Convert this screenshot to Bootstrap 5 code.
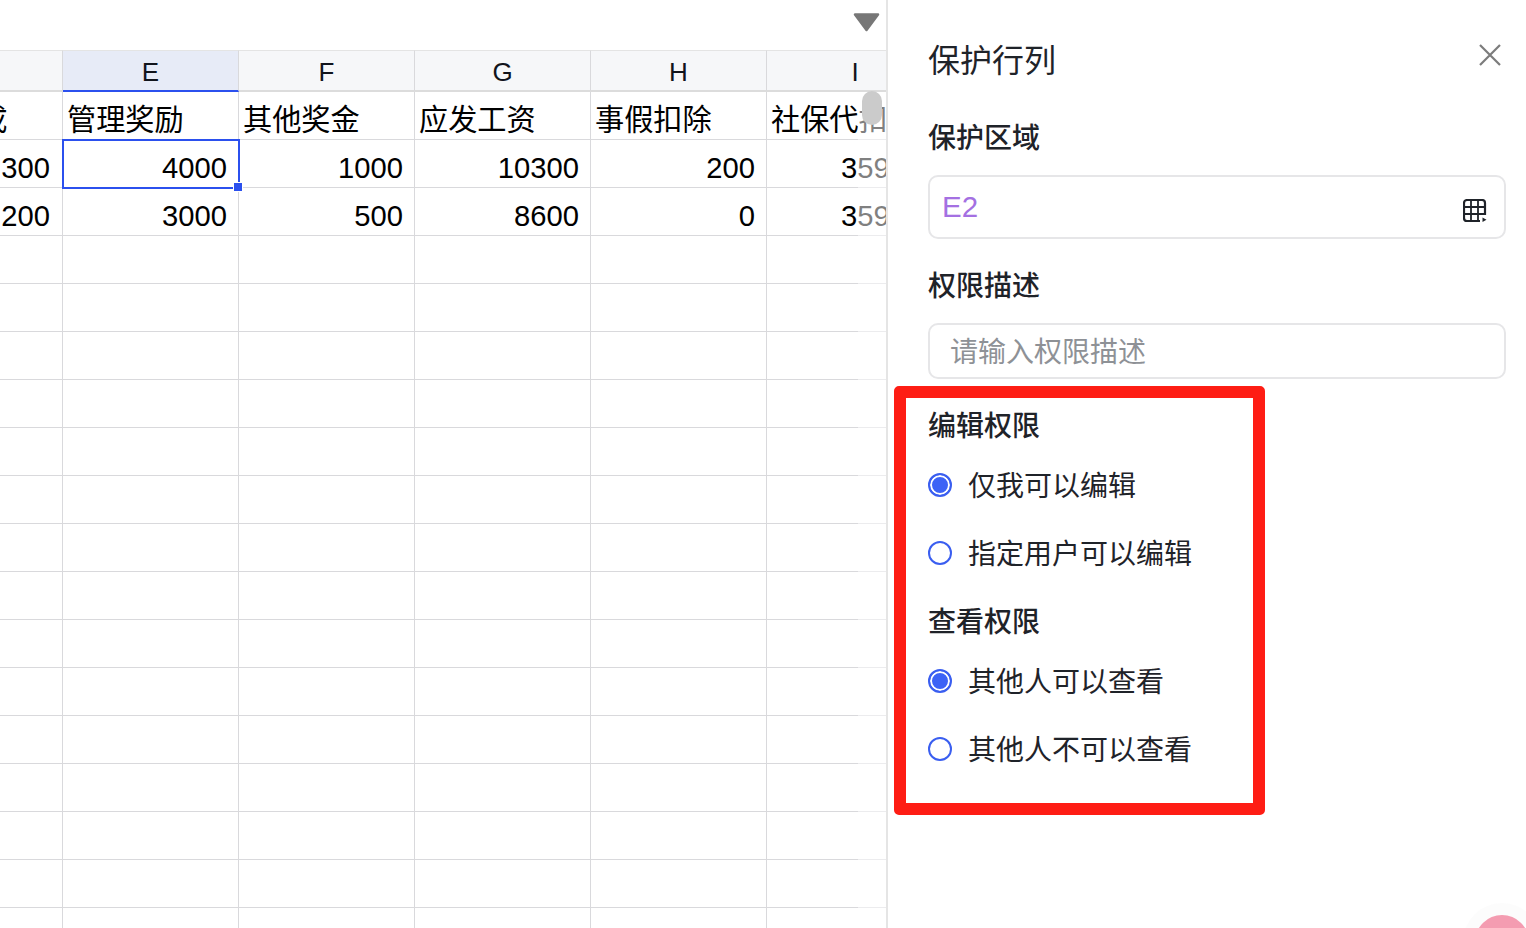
<!DOCTYPE html>
<html lang="zh">
<head>
<meta charset="utf-8">
<title>保护行列</title>
<link href="https://cdn.jsdelivr.net/npm/bootstrap@5.3.0/dist/css/bootstrap.min.css" rel="stylesheet">
<style>
html,body{height:100%;overflow:hidden;background:#fff;}
body{font-family:"Liberation Sans","Noto Sans CJK SC",sans-serif;color:#000;}
.stage{height:928px;position:relative;overflow:hidden;}
.sheet-pane{width:886px;flex:none;position:relative;overflow:hidden;height:928px;}
.sheet-top{height:50px;position:relative;}
.tri-btn{position:absolute;left:853px;top:13px;}
.sheet-grid{table-layout:fixed;width:943px;border-collapse:separate;border-spacing:0;margin:0;font-size:29.2px;line-height:36px;}
.sheet-grid col.c0{width:63px;}
.sheet-grid col.cn{width:176px;}
.sheet-grid td,.sheet-grid th{height:48px;padding:8px 11px 0 4px;border-right:1px solid #d9d9dc;border-bottom:1px solid #d9d9dc;overflow:hidden;white-space:nowrap;font-weight:400;vertical-align:middle;color:#000;}
.sheet-grid th{height:42px;background:#f6f7f9;text-align:center;font-size:26px;border-top:1px solid #e4e4e4;border-bottom:2px solid #dcdcdc;padding:3px 0 0;color:#11141c;}
.sheet-grid th.active-col{background:#e7ebf7;border-bottom-color:#2b50ee;}
.sheet-grid th:last-child,.sheet-grid td:last-child{border-right:0;}
.sheet-grid td.num{text-align:right;}
.sheet-grid .title-row td{padding-top:8px;}
.sheet-grid td.edge-num{padding-left:0;padding-right:12px;}
.sheet-grid td.tail-num{padding-right:37px;}
.sheet-grid .title-row td.cut{padding-left:0;padding-right:0;}
.clip-left{display:block;margin-left:-51px;}
.sel-cell{position:absolute;left:62px;top:139px;width:178px;height:50px;border:2px solid #2b50ee;pointer-events:none;}
.sel-dot{position:absolute;right:-5px;bottom:-5px;width:10px;height:10px;background:#2b50ee;border:1px solid #fff;}
.scroll-veil{position:absolute;left:858px;top:92px;width:28px;bottom:0;background:rgba(255,255,255,.5);}
.scroll-thumb{position:absolute;left:862px;top:91px;width:20px;height:34px;border-radius:10px;background:#cbcbcb;}
.side-pane{flex:1;border-left:2px solid #e5e5e5;padding:40px 20px 0 40px;color:#1f2329;font-family:"Noto Sans CJK SC","Liberation Sans",sans-serif;}
.side-title{font-size:32px;line-height:36px;font-weight:400;margin:0;padding-bottom:4px;}
.close-x{position:absolute;right:25px;top:44px;}
.side-label{font-size:28px;line-height:38px;font-weight:500;margin:0;display:block;padding:0 0 2px;}
.mt-a{margin-top:37px;}
.mt-b{margin-top:26px;}
.mt-d{margin-top:26px;}
.mt-e{margin-top:27px;}
.mt-c{margin-top:28px;}
.field{border:2px solid #e6e6e8;border-radius:10px;margin-top:18px;background:#fff;}
.field-range{height:64px;padding:0 17px 0 12px;}
.field-text{height:56px;padding:0 20px 2px;}
.field .form-control{border:0;padding:0;box-shadow:none;background:transparent;border-radius:0;font-size:28px;line-height:36px;}
.field-range .form-control{color:#a470e2;font-family:"Liberation Sans",sans-serif;font-size:29.5px;}
.field-text .form-control::placeholder{color:#8e9196;opacity:1;}
.range-ico{flex:none;margin-top:8px;}
.opt{min-height:0;height:40px;padding:0;margin:28px 0 0;gap:16px;}
.opt.first{margin-top:20px;}
.opt .form-check-input{float:none;margin:0;width:24px;height:24px;flex:none;border:2px solid #3a5ef0;background-color:#fff;background-image:none;}
.opt .form-check-input:checked{background-color:#3d63f6;background-image:none;box-shadow:inset 0 0 0 2px #fff;}
.opt .form-check-label{font-size:28px;line-height:38px;margin-bottom:2px;}
.mark-box{position:absolute;left:894px;top:386px;width:371px;height:429px;border:12px solid #fe1d14;border-radius:5px;pointer-events:none;}
.help-ball{position:absolute;left:1475px;top:915px;width:54px;height:54px;border-radius:50%;background:#f49cb1;box-shadow:0 0 0 12px rgba(240,240,240,.18);}
</style>
</head>
<body>
<div class="stage d-flex">
  <div class="sheet-pane">
    <div class="sheet-top">
      <svg class="tri-btn" width="27" height="19" viewBox="0 0 27 19"><path d="M2 1.5H25L13.5 17Z" fill="#777" stroke="#777" stroke-width="2.5" stroke-linejoin="round"/></svg>
    </div>
    <table class="sheet-grid">
      <colgroup><col class="c0"><col class="cn"><col class="cn"><col class="cn"><col class="cn"><col class="cn"></colgroup>
      <thead><tr><th></th><th class="active-col">E</th><th>F</th><th>G</th><th>H</th><th>I</th></tr></thead>
      <tbody>
        <tr class="title-row"><td class="cut"><span class="clip-left">提成</span></td><td>管理奖励</td><td>其他奖金</td><td>应发工资</td><td>事假扣除</td><td>社保代扣</td></tr>
        <tr><td class="num edge-num">300</td><td class="num">4000</td><td class="num">1000</td><td class="num">10300</td><td class="num">200</td><td class="num tail-num">3590</td></tr>
        <tr><td class="num edge-num">200</td><td class="num">3000</td><td class="num">500</td><td class="num">8600</td><td class="num">0</td><td class="num tail-num">3590</td></tr>
        <tr><td></td><td></td><td></td><td></td><td></td><td></td></tr>
        <tr><td></td><td></td><td></td><td></td><td></td><td></td></tr>
        <tr><td></td><td></td><td></td><td></td><td></td><td></td></tr>
        <tr><td></td><td></td><td></td><td></td><td></td><td></td></tr>
        <tr><td></td><td></td><td></td><td></td><td></td><td></td></tr>
        <tr><td></td><td></td><td></td><td></td><td></td><td></td></tr>
        <tr><td></td><td></td><td></td><td></td><td></td><td></td></tr>
        <tr><td></td><td></td><td></td><td></td><td></td><td></td></tr>
        <tr><td></td><td></td><td></td><td></td><td></td><td></td></tr>
        <tr><td></td><td></td><td></td><td></td><td></td><td></td></tr>
        <tr><td></td><td></td><td></td><td></td><td></td><td></td></tr>
        <tr><td></td><td></td><td></td><td></td><td></td><td></td></tr>
        <tr><td></td><td></td><td></td><td></td><td></td><td></td></tr>
        <tr><td></td><td></td><td></td><td></td><td></td><td></td></tr>
        <tr><td></td><td></td><td></td><td></td><td></td><td></td></tr>
      </tbody>
    </table>
    <div class="sel-cell"><span class="sel-dot"></span></div>
    <div class="scroll-veil"></div>
    <div class="scroll-thumb"></div>
  </div>

  <aside class="side-pane">
    <h1 class="side-title">保护行列</h1>
    <svg class="close-x" width="22" height="22" viewBox="0 0 22 22"><path d="M1 1L21 21M21 1L1 21" stroke="#7c7c7c" stroke-width="2.2" fill="none"/></svg>

    <label class="side-label mt-a" for="rangeInput">保护区域</label>
    <div class="field field-range d-flex align-items-center">
      <input id="rangeInput" class="form-control" type="text" value="E2">
      <svg class="range-ico" width="24" height="24" viewBox="0 0 24 24"><path d="M22 16V4a3 3 0 0 0-3-3H4a3 3 0 0 0-3 3v15a3 3 0 0 0 3 3h13" fill="none" stroke="#1f2329" stroke-width="2.2"/><path d="M8 1v21M15 1v21M1 8h21M1 15h21" fill="none" stroke="#1f2329" stroke-width="1.8"/><path d="M19.5 18.5l4 2.2-4 2.2z" fill="#1f2329"/></svg>
    </div>

    <label class="side-label mt-d" for="descInput">权限描述</label>
    <div class="field field-text d-flex align-items-center">
      <input id="descInput" class="form-control" type="text" placeholder="请输入权限描述">
    </div>

    <div class="side-label mt-d">编辑权限</div>
    <div class="form-check opt first d-flex align-items-center">
      <input class="form-check-input" type="radio" name="editPerm" id="e1" checked>
      <label class="form-check-label" for="e1">仅我可以编辑</label>
    </div>
    <div class="form-check opt d-flex align-items-center">
      <input class="form-check-input" type="radio" name="editPerm" id="e2">
      <label class="form-check-label" for="e2">指定用户可以编辑</label>
    </div>

    <div class="side-label mt-c">查看权限</div>
    <div class="form-check opt first d-flex align-items-center">
      <input class="form-check-input" type="radio" name="viewPerm" id="v1" checked>
      <label class="form-check-label" for="v1">其他人可以查看</label>
    </div>
    <div class="form-check opt d-flex align-items-center">
      <input class="form-check-input" type="radio" name="viewPerm" id="v2">
      <label class="form-check-label" for="v2">其他人不可以查看</label>
    </div>
  </aside>

  <div class="mark-box"></div>
  <div class="help-ball"></div>
</div>
<script src="https://cdn.jsdelivr.net/npm/bootstrap@5.3.0/dist/js/bootstrap.bundle.min.js"></script>
</body>
</html>
